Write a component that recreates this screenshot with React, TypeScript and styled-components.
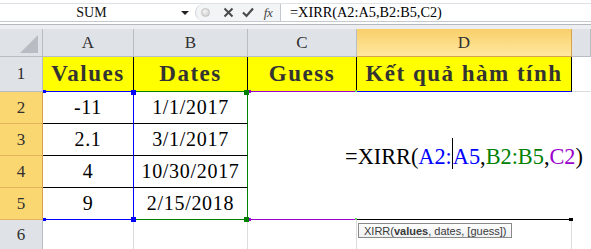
import styled, { createGlobalStyle } from "styled-components";

const Global = createGlobalStyle`
  html, body { margin: 0; padding: 0; background: #fff; overflow: hidden; }
  #root { width: 591px; height: 249px; }
`;

const Page = styled.div`
  position: relative;
  width: 591px;
  height: 249px;
  overflow: hidden;
  background: #fff;
  font-family: "Liberation Serif", "Times New Roman", serif;
  padding-top: 3px;
  box-sizing: border-box;
`;

const FormulaBar = styled.div`
  display: flex;
  height: 19px;
  box-sizing: border-box;
  border-top: 1px solid #dde1e6;
  border-bottom: 1px solid #c4c9d0;
`;

const NameBox = styled.div`
  width: 195px;
  display: flex;
  align-items: center;
  font-size: 14px;
  color: #111;
`;

const NameText = styled.div`
  flex: 1;
  text-align: center;
  padding-left: 2px;
`;

const DropArrow = styled.div`
  width: 0;
  height: 0;
  border-left: 4px solid transparent;
  border-right: 4px solid transparent;
  border-top: 4px solid #222;
  margin-right: 6px;
`;

const Controls = styled.div`
  width: 84px;
  display: flex;
  align-items: center;
  background: #f3f4f6;
  border-left: 1px solid #cfd3d9;
  border-radius: 9px 0 0 9px;
`;

const Knob = styled.div`
  width: 7px;
  height: 7px;
  border-radius: 50%;
  background: radial-gradient(circle at 40% 35%, #f4f4f4, #c9c9c9);
  border: 1px solid #c2c2c2;
  margin: 0 8px 0 5px;
`;

const Tool = styled.div`
  width: 20px;
  display: flex;
  justify-content: center;
  align-items: center;
`;

const Fx = styled.span`
  font-style: italic;
  font-size: 13px;
  color: #444;
  letter-spacing: -0.5px;
`;

const FormulaInput = styled.div`
  flex: 1;
  border-left: 1px solid #c4c9d0;
  padding-left: 9px;
  font-size: 14.3px;
  line-height: 17px;
  color: #000;
  white-space: nowrap;
`;

const Gap = styled.div`
  height: 2px;
`;

const Rule = styled.div`
  height: 1px;
  background: #b4b9c0;
`;

const Band = styled.div`
  height: 4px;
  background: #eceef1;
`;

const Sheet = styled.div`
  display: grid;
  grid-template-columns: 43px 91px 114px 109px 215px 19px;
  grid-template-rows: 28px 35px 32px 32px 32px 32px 30px;
`;

const Corner = styled.div`
  position: relative;
  background: #dfe2e7;
  border-right: 1px solid #b8bdc4;
  border-bottom: 1px solid #b8bdc4;
  &::after {
    content: "";
    position: absolute;
    right: 4px;
    bottom: 3px;
    width: 18px;
    height: 18px;
    background: #b9bdc3;
    clip-path: polygon(100% 0, 100% 100%, 0 100%);
  }
`;

const ColHead = styled.div<{ $active?: boolean }>`
  display: flex;
  align-items: center;
  justify-content: center;
  font-size: 17px;
  color: #2f2f2f;
  background: ${(p) =>
    p.$active ? "linear-gradient(#f9cf6a, #ffe89f)" : "#dfe2e7"};
  border-right: 1px solid ${(p) => (p.$active ? "#d9a24c" : "#b8bdc4")};
  border-bottom: 1px solid ${(p) => (p.$active ? "#d9a24c" : "#b8bdc4")};
`;

const RowHead = styled.div<{ $active?: boolean }>`
  display: flex;
  align-items: center;
  justify-content: center;
  font-size: 17px;
  color: #2f2f2f;
  background: ${(p) => (p.$active ? "#fbd772" : "#dfe2e7")};
  border-right: 1px solid ${(p) => (p.$active ? "#d9a24c" : "#b8bdc4")};
  border-bottom: 1px solid ${(p) => (p.$active ? "#e2b35e" : "#b8bdc4")};
`;

const Cell = styled.div<{ $right?: string; $bottom?: string }>`
  display: flex;
  align-items: center;
  justify-content: center;
  font-size: 20px;
  letter-spacing: 0.7px;
  color: #000;
  background: #fff;
  border-right: 1px solid ${(p) => p.$right ?? "#fff"};
  border-bottom: 1px solid ${(p) => p.$bottom ?? "#fff"};
`;

const TitleCell = styled(Cell)`
  background: #ffff00;
  font-weight: bold;
  font-size: 23px;
  letter-spacing: 1.5px;
  color: #333;
`;

const EditCell = styled(Cell)`
  position: relative;
  z-index: 1;
  background: transparent;
  font-size: 22.3px;
  letter-spacing: 0;
  white-space: nowrap;
  overflow: visible;
  padding-top: 2px;
`;

const Ref = styled.span<{ $color: string }>`
  color: ${(p) => p.$color};
`;

const Caret = styled.span`
  display: inline-block;
  width: 0;
  height: 31px;
  border-left: 1px solid #000;
  vertical-align: middle;
  margin-top: -6px;
`;

const Handle = styled.div<{ $x: number; $y: number; $w: number; $h: number; $color: string }>`
  position: absolute;
  z-index: 2;
  left: ${(p) => p.$x}px;
  top: ${(p) => p.$y}px;
  width: ${(p) => p.$w}px;
  height: ${(p) => p.$h}px;
  background: ${(p) => p.$color};
`;

const Tip = styled.div`
  position: absolute;
  z-index: 3;
  left: 358px;
  top: 223px;
  height: 15px;
  padding: 0 5px;
  box-sizing: border-box;
  display: flex;
  align-items: center;
  font-family: "Liberation Sans", Arial, sans-serif;
  font-size: 11px;
  color: #3a3a3a;
  background: linear-gradient(#ffffff, #eef0f2);
  border: 1px solid #8a8a8a;
  white-space: nowrap;
  b { font-weight: bold; }
`;

const BLUE = "#0000ff";
const GREEN = "#008000";
const PURPLE = "#9900cc";
const GRID = "#dadcdf";

const rows = [
  ["-11", "1/1/2017"],
  ["2.1", "3/1/2017"],
  ["4", "10/30/2017"],
  ["9", "2/15/2018"],
];

export default function App() {
  return (
    <Page>
      <Global />
      <FormulaBar>
        <NameBox>
          <NameText>SUM</NameText>
          <DropArrow />
        </NameBox>
        <Controls>
          <Knob />
          <Tool>
            <svg width="11" height="11" viewBox="0 0 11 11">
              <path d="M1.5 1.5 L9.5 9.5 M9.5 1.5 L1.5 9.5" stroke="#4a4a4a" strokeWidth="2" />
            </svg>
          </Tool>
          <Tool>
            <svg width="12" height="11" viewBox="0 0 12 11">
              <path d="M1 5.5 L4.5 9 L11 1.5" stroke="#4a4a4a" strokeWidth="2.2" fill="none" />
            </svg>
          </Tool>
          <Tool>
            <Fx>fx</Fx>
          </Tool>
        </Controls>
        <FormulaInput>=XIRR(A2:A5,B2:B5,C2)</FormulaInput>
      </FormulaBar>
      <Gap />
      <Rule />
      <Band />
      <Sheet>
        <Corner />
        <ColHead>A</ColHead>
        <ColHead>B</ColHead>
        <ColHead>C</ColHead>
        <ColHead $active>D</ColHead>
        <ColHead />

        <RowHead>1</RowHead>
        <TitleCell $right="#000" $bottom={BLUE}>Values</TitleCell>
        <TitleCell $right="#000" $bottom={GREEN}>Dates</TitleCell>
        <TitleCell $right="#000" $bottom={PURPLE}>Guess</TitleCell>
        <TitleCell $right="#000" $bottom={BLUE}>Kết quả hàm tính</TitleCell>
        <Cell $bottom={GRID} />

        {rows.map(([v, d], i) => {
          const last = i === rows.length - 1;
          return [
            <RowHead key={`h${i}`} $active style={{ gridColumn: 1, gridRow: i + 3 }}>
              {i + 2}
            </RowHead>,
            <Cell key={`a${i}`} $right={BLUE} $bottom={last ? BLUE : "#000"} style={{ gridColumn: 2, gridRow: i + 3 }}>
              {v}
            </Cell>,
            <Cell key={`b${i}`} $right={GREEN} $bottom={last ? GREEN : "#000"} style={{ gridColumn: 3, gridRow: i + 3 }}>
              {d}
            </Cell>,
          ];
        })}
        <Cell $bottom={PURPLE} style={{ gridColumn: 4, gridRow: "3 / span 4" }} />
        <EditCell $bottom="#000" style={{ gridColumn: 5, gridRow: "3 / span 4" }}>
          =XIRR(<Ref $color={BLUE}>A2:</Ref>
          <Caret />
          <Ref $color={BLUE}>A5</Ref>,<Ref $color={GREEN}>B2:B5</Ref>,
          <Ref $color={PURPLE}>C2</Ref>)
        </EditCell>
        <Cell style={{ gridColumn: 6, gridRow: "3 / span 4" }} />

        <RowHead>6</RowHead>
        <Cell $right={GRID} />
        <Cell $right={GRID} />
        <Cell $right={GRID} />
        <Cell $right={GRID} />
        <Cell />
      </Sheet>

      <Handle $x={43} $y={90} $w={3} $h={3} $color={BLUE} />
      <Handle $x={131} $y={90} $w={5} $h={5} $color={BLUE} />
      <Handle $x={244} $y={90} $w={5} $h={5} $color={GREEN} />
      <Handle $x={249} $y={90} $w={2} $h={3} $color={PURPLE} />
      <Handle $x={355} $y={90} $w={2} $h={2} $color="#6fd36f" />
      <Handle $x={43} $y={218} $w={3} $h={3} $color={BLUE} />
      <Handle $x={131} $y={217} $w={5} $h={5} $color={BLUE} />
      <Handle $x={244} $y={217} $w={5} $h={5} $color={GREEN} />
      <Handle $x={249} $y={218} $w={2} $h={3} $color={PURPLE} />
      <Handle $x={355} $y={218} $w={2} $h={2} $color="#6fd36f" />
      <Handle $x={569} $y={218} $w={4} $h={3} $color="#000" />

      <Tip>
        XIRR(<b>values</b>, dates, [guess])
      </Tip>
    </Page>
  );
}
